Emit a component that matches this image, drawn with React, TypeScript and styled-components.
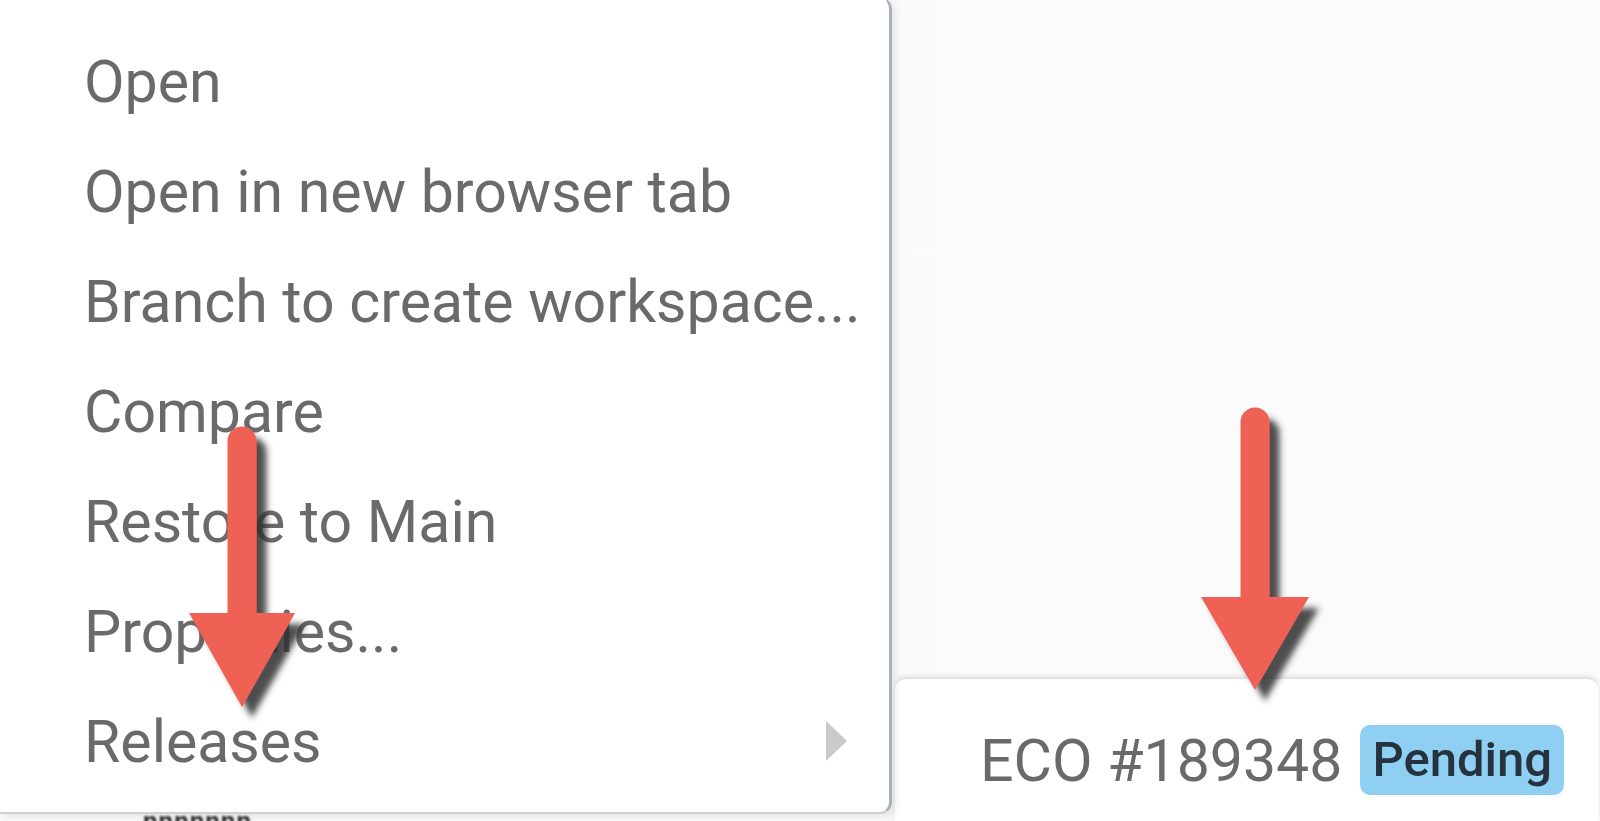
import React from "react";
import styled, { createGlobalStyle } from "styled-components";

const Global = createGlobalStyle`
  html, body { margin: 0; padding: 0; background: #f8f8f8; }
  * { box-sizing: border-box; }
`;

const Page = styled.div`
  position: relative;
  width: 1600px;
  height: 821px;
  overflow: hidden;
  display: flex;
  background: linear-gradient(to right, #ececec 0px, #f7f7f7 14px, #fafafa 60px, #fbfbfb 100%);
  font-family: Roboto, "Noto Sans", sans-serif;
`;

const MenuColumn = styled.div`
  width: 892px;
  flex: none;
  display: flex;
  flex-direction: column;
  background: #fafafa;
`;

const Menu = styled.div`
  margin-top: -4px;
  background: #ffffff;
  border-right: 3px solid #a6b1bc;
  border-bottom: 2px solid #cfcfcf;
  border-radius: 0 14px 12px 0;
  padding: 30px 42px 16px 0;
  box-shadow: 3px 2px 8px rgba(0, 0, 0, 0.1);
  position: relative;
  z-index: 1;
`;

const Item = styled.div`
  height: 110px;
  display: flex;
  align-items: center;
  justify-content: space-between;
  padding-left: 84px;
  font-size: 59px;
  color: #6a6a6a;
  white-space: nowrap;
`;

const Chevron = styled.span`
  width: 0;
  height: 0;
  border-left: 21px solid #cacaca;
  border-top: 20px solid transparent;
  border-bottom: 20px solid transparent;
`;

const BelowText = styled.div`
  padding-left: 143px;
  margin-top: -6px;
  font-size: 26px;
  line-height: 1;
  font-weight: 700;
  color: #333;
  letter-spacing: 1px;
  filter: blur(1px);
`;

const RightArea = styled.div`
  flex: 1;
  display: flex;
  flex-direction: column;
  padding: 678px 2px 0 3px;
`;

const SubMenu = styled.div`
  flex: 1;
  background: #ffffff;
  border-radius: 10px 10px 0 0;
  border-top: 1px solid #dedede;
  box-shadow: 0 -2px 4px rgba(0, 0, 0, 0.1);
  padding: 41px 0 0 85px;
`;

const SubRow = styled.div`
  height: 80px;
  display: flex;
  align-items: center;
  gap: 18px;
`;

const EcoText = styled.span`
  font-size: 59px;
  color: #6a6a6a;
  white-space: nowrap;
`;

const Badge = styled.span`
  height: 70px;
  line-height: 70px;
  padding: 0 12px;
  border-radius: 10px;
  background: #8ecff2;
  color: #26323d;
  font-size: 49px;
  font-weight: 500;
  white-space: nowrap;
`;

const Overlay = styled.svg`
  position: absolute;
  left: 0;
  top: 0;
  width: 1600px;
  height: 821px;
  pointer-events: none;
  z-index: 5;
`;

type ArrowProps = { cx: number; top: number; base: number; half: number; tip: number };

const Arrow = ({ cx, top, base, half, tip }: ArrowProps) => (
  <g>
    <line x1={cx} y1={top + 14} x2={cx} y2={base + 4} stroke="#ef6055" strokeWidth={29} strokeLinecap="round" />
    <polygon points={`${cx - half},${base} ${cx + half},${base} ${cx},${tip}`} fill="#ef6055" />
  </g>
);

const items = [
  "Open",
  "Open in new browser tab",
  "Branch to create workspace...",
  "Compare",
  "Restore to Main",
  "Properties...",
];

export default function App() {
  return (
    <>
      <Global />
      <Page>
        <MenuColumn>
          <Menu>
            {items.map((t) => (
              <Item key={t}>{t}</Item>
            ))}
            <Item>
              Releases
              <Chevron />
            </Item>
          </Menu>
          <BelowText>nnnnnnn</BelowText>
        </MenuColumn>
        <RightArea>
          <SubMenu>
            <SubRow>
              <EcoText>ECO #189348</EcoText>
              <Badge>Pending</Badge>
            </SubRow>
          </SubMenu>
        </RightArea>
        <Overlay viewBox="0 0 1600 821">
          <defs>
            <filter id="arrowShadow" x="-50%" y="-50%" width="200%" height="200%">
              <feDropShadow dx="10" dy="11" stdDeviation="3" floodColor="#2e2e2e" floodOpacity="0.85" />
            </filter>
          </defs>
          <g filter="url(#arrowShadow)">
            <Arrow cx={242} top={427} base={613} half={53} tip={707} />
            <Arrow cx={1255} top={408} base={597} half={54} tip={690} />
          </g>
        </Overlay>
      </Page>
    </>
  );
}
